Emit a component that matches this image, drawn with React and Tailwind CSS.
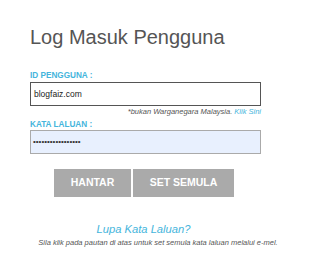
export default function App() {
  return (
    <div className="w-[300px] h-[271px] bg-white font-['Liberation_Sans',Arial,sans-serif] overflow-hidden">
      <div className="pl-[30px] pt-[26px] w-[261px]">
        <h1 className="text-[20px] leading-[23px] text-[#555]">Log Masuk Pengguna</h1>

        <div className="mt-[22px] text-[8.2px] leading-[9px] font-bold text-[#45b5dc]">ID PENGGUNA :</div>
        <div className="mt-[2px] h-[24px] border border-[#555] flex items-center px-[3px] text-[8.5px] text-[#222]">
          blogfaiz.com
        </div>
        <div className="mt-[2px] text-right text-[7.5px] leading-[8px] italic text-[#555]">
          *bukan Warganegara Malaysia. <span className="text-[#45b5dc]">Klik Sini</span>
        </div>

        <div className="mt-[4px] text-[8.2px] leading-[9px] font-bold text-[#45b5dc]">KATA LALUAN :</div>
        <div className="mt-[1px] h-[24px] border border-[#aaa] bg-[#e8f0fe] flex items-center px-[2px] text-[8px] text-[#333]">
          •••••••••••••••••
        </div>
      </div>

      <div className="mt-[15px] flex justify-center gap-[2px] pr-[12px]">
        <button className="w-[77px] h-[28px] bg-[#aaa] text-white font-bold text-[10.5px]">HANTAR</button>
        <button className="w-[101px] h-[28px] bg-[#aaa] text-white font-bold text-[10.5px]">SET SEMULA</button>
      </div>

      <div className="mt-[26px] text-center">
        <div className="pr-[13px] text-[11.2px] leading-[13px] italic text-[#45b5dc]">Lupa Kata Laluan?</div>
        <div className="mt-[2px] pl-[16px] text-[7.5px] leading-[9px] italic text-[#555]">
          Sila klik pada pautan di atas untuk set semula kata laluan melalui e-mel.
        </div>
      </div>
    </div>
  );
}
